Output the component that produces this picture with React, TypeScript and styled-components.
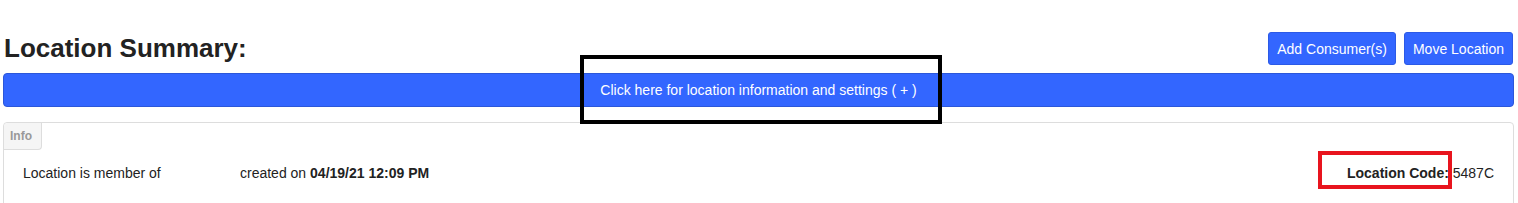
import styled, { createGlobalStyle } from "styled-components";

const GlobalStyle = createGlobalStyle`
  html, body {
    margin: 0;
    padding: 0;
    background: #fff;
    font-family: "Liberation Sans", Arial, sans-serif;
    color: #222;
  }
`;

const BLUE = "#3366ff";

const Page = styled.div`
  position: relative;
  width: 1518px;
  height: 203px;
  overflow: hidden;
  padding: 32px 4px 0 3px;
  box-sizing: border-box;
`;

const Header = styled.div`
  display: flex;
  justify-content: space-between;
  align-items: flex-start;
  height: 33px;
`;

const Title = styled.h2`
  margin: 0 0 0 1px;
  font-size: 26px;
  line-height: 33px;
  font-weight: 700;
  color: #222;
`;

const Actions = styled.div`
  display: flex;
  gap: 8px;
  margin-right: 1px;
`;

const Button = styled.button`
  height: 33px;
  padding: 0 8px;
  background: ${BLUE};
  border: 1px solid #2c5ae6;
  border-radius: 3px;
  color: #fff;
  font-family: inherit;
  font-size: 14px;
  cursor: pointer;
`;

const ToggleBar = styled.div`
  margin-top: 8px;
  height: 34px;
  box-sizing: border-box;
  background: ${BLUE};
  border: 1px solid #2c57d9;
  border-radius: 4px;
  color: #fff;
  font-size: 14px;
  line-height: 32px;
  text-align: center;
  cursor: pointer;
`;

const Panel = styled.div`
  margin-top: 15px;
  height: 120px;
  border: 1px solid #ddd;
  border-radius: 4px;
`;

const Tab = styled.div`
  width: 31px;
  height: 26px;
  padding-left: 6px;
  background: #f5f5f5;
  border-right: 1px solid #ddd;
  border-bottom: 1px solid #ddd;
  border-radius: 4px 0 4px 0;
  color: #999;
  font-size: 12px;
  font-weight: 700;
  line-height: 26px;
`;

const InfoRow = styled.div`
  display: flex;
  align-items: center;
  margin-top: 13px;
  padding: 0 19px;
  font-size: 14px;
  line-height: 20px;
  color: #222;
`;

const Membership = styled.span`
  width: 217px;
`;

const Spacer = styled.span`
  flex: 1;
`;

const Strong = styled.b`
  font-weight: 700;
`;

const Annotation = styled.div<{ $color: string }>`
  position: absolute;
  box-sizing: border-box;
  border: 4px solid ${(p) => p.$color};
  pointer-events: none;
`;

export default function App() {
  return (
    <>
      <GlobalStyle />
      <Page>
        <Header>
          <Title>Location Summary:</Title>
          <Actions>
            <Button>Add Consumer(s)</Button>
            <Button>Move Location</Button>
          </Actions>
        </Header>
        <ToggleBar>Click here for location information and settings ( + )</ToggleBar>
        <Panel>
          <Tab>Info</Tab>
          <InfoRow>
            <Membership>Location is member of</Membership>
            <span>
              created on <Strong>04/19/21 12:09 PM</Strong>
            </span>
            <Spacer />
            <span>
              <Strong>Location Code:</Strong> 5487C
            </span>
          </InfoRow>
        </Panel>
        <Annotation $color="#000" style={{ left: 580, top: 55, width: 362, height: 69 }} />
        <Annotation $color="#e8141e" style={{ left: 1318, top: 151, width: 134, height: 38 }} />
      </Page>
    </>
  );
}
